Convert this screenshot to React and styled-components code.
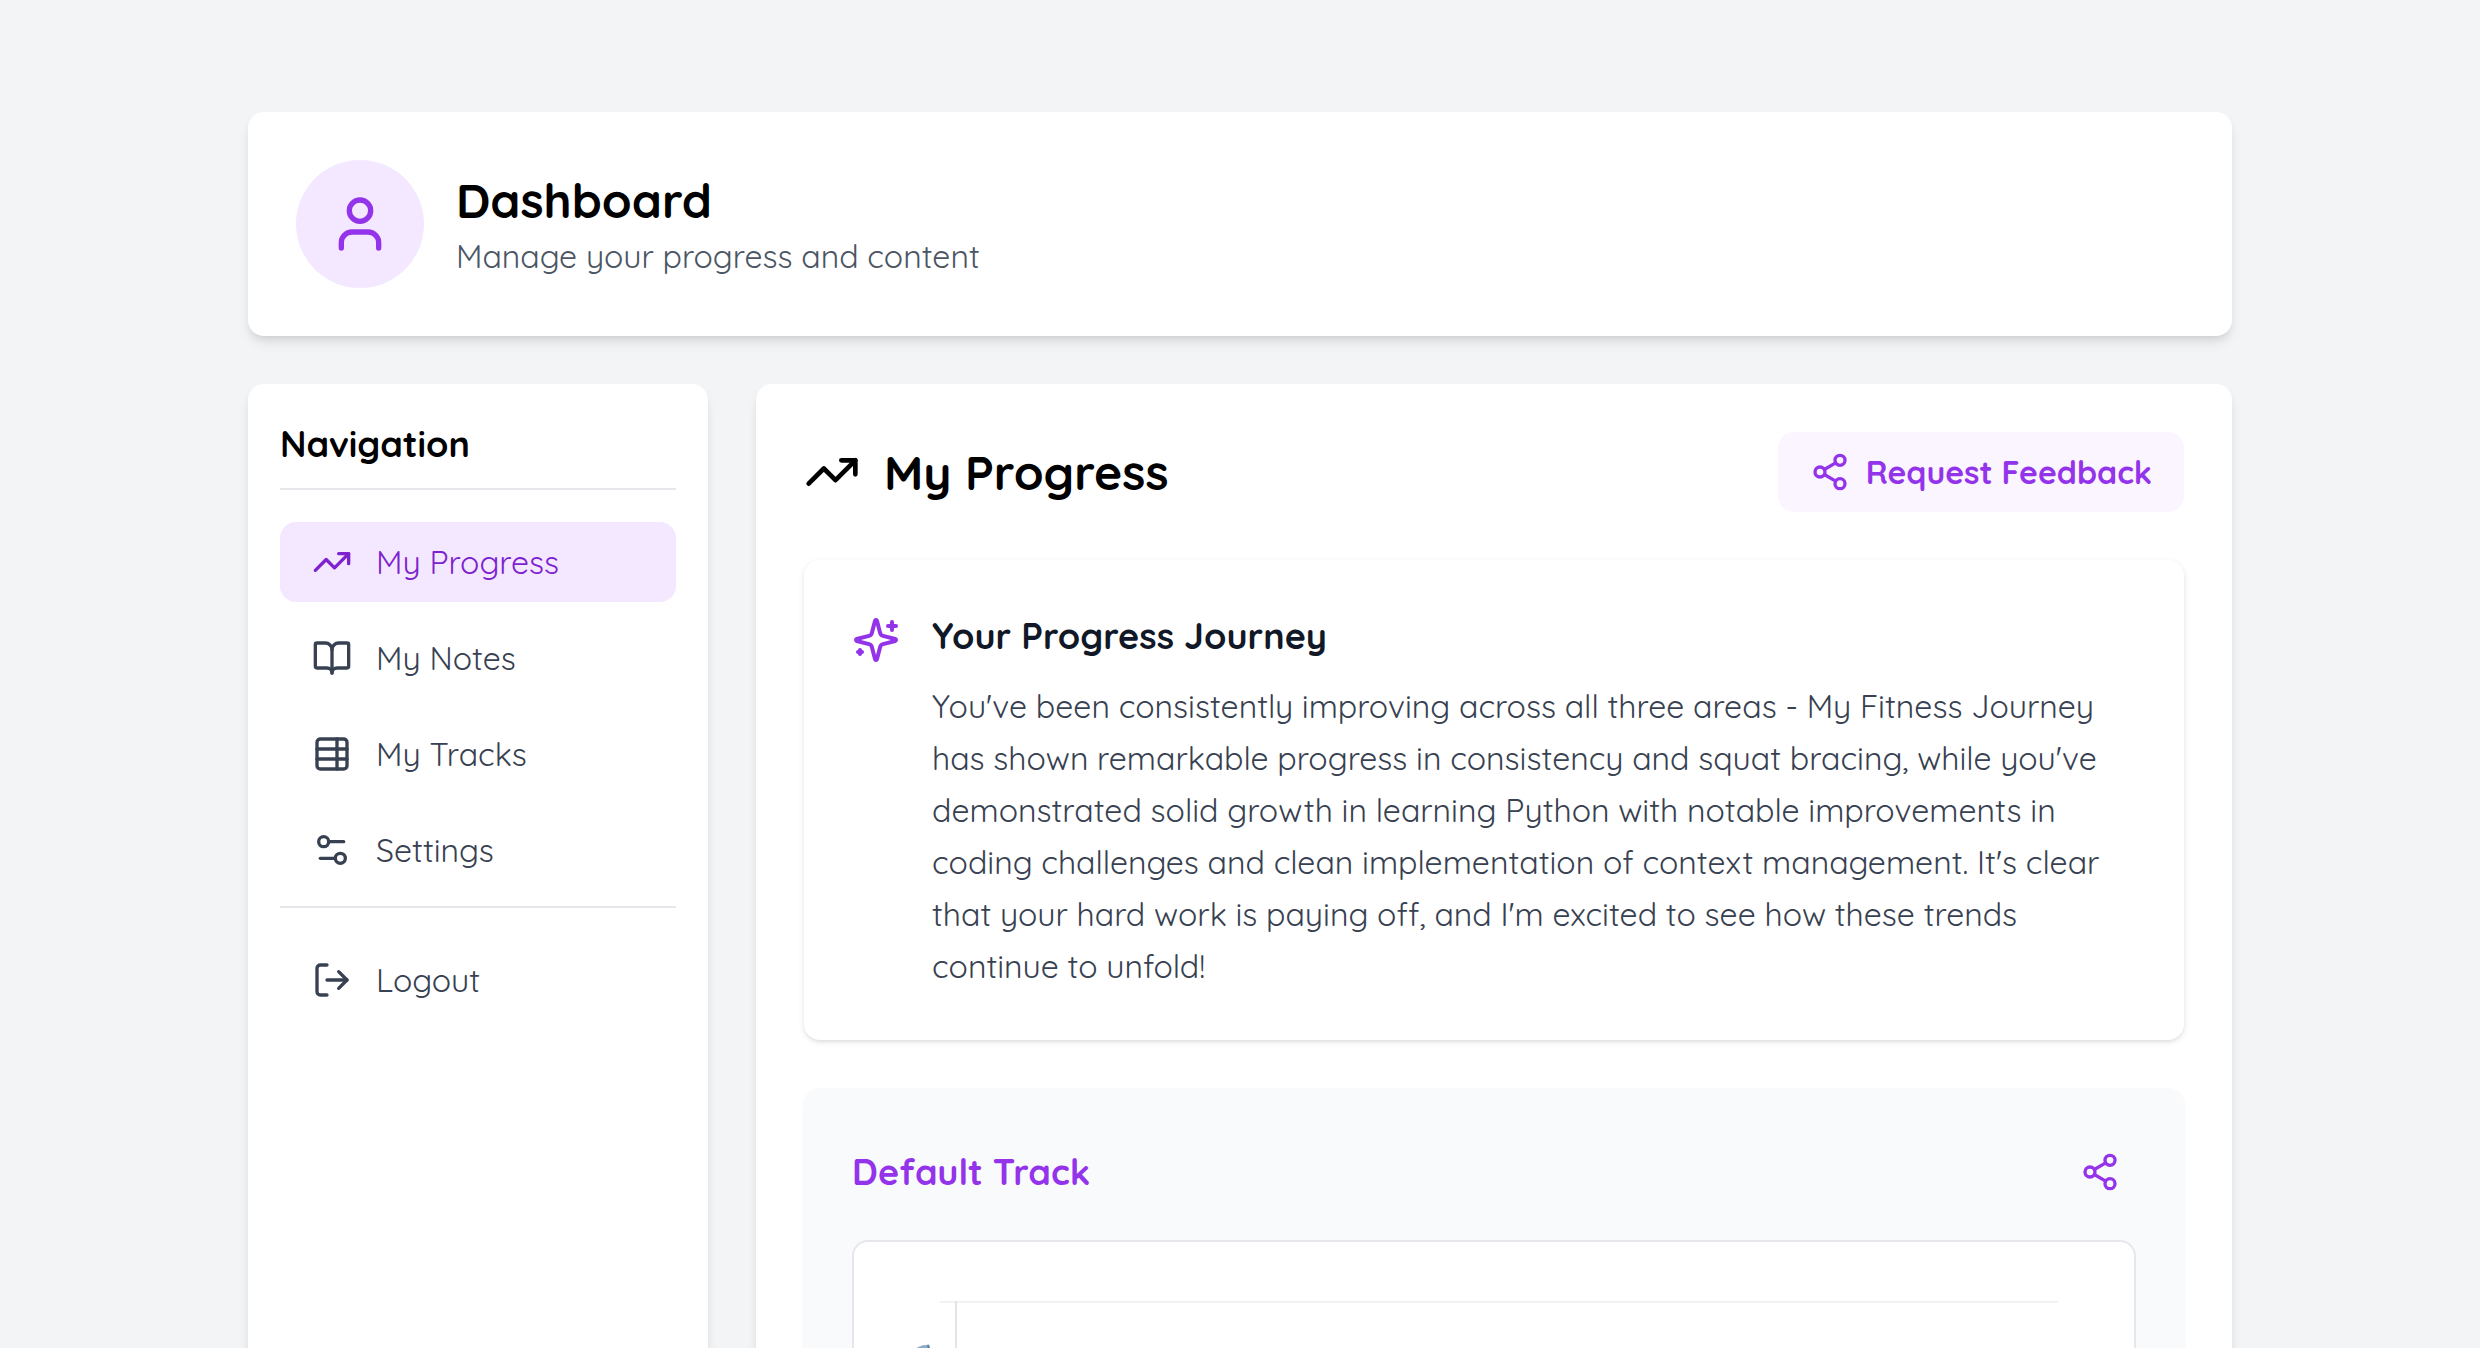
import React, { useState } from "react";
import styled, { createGlobalStyle } from "styled-components";
import {
  BookOpen,
  LogOut,
  Settings2,
  Share2,
  TableProperties,
  TrendingUp,
  User,
} from "lucide-react";

const GlobalStyle = createGlobalStyle`
  *,
  *::before,
  *::after {
    box-sizing: border-box;
  }
  body {
    margin: 0;
    background: #f3f4f6;
    color: #000;
    font-family: Quicksand, "Open Sans", sans-serif;
    font-size: 32px;
    line-height: 48px;
  }
  h1,
  h2,
  h3,
  p {
    margin: 0;
  }
  button {
    font: inherit;
    cursor: pointer;
  }
`;

const Page = styled.div`
  min-height: 100vh;
  padding: 112px 10%;
`;
const Card = styled.div`
  background: #fff;
  border-radius: 16px;
  box-shadow: 0 8px 12px -2px rgba(0, 0, 0, 0.1),
    0 4px 8px -4px rgba(0, 0, 0, 0.1);
`;
const HeaderCard = styled(Card).attrs({ as: "header" })`
  display: flex;
  align-items: center;
  gap: 32px;
  padding: 48px;
  margin-bottom: 48px;
`;
const Avatar = styled.div`
  display: flex;
  align-items: center;
  justify-content: center;
  width: 128px;
  height: 128px;
  border-radius: 50%;
  background: #f3e8ff;
  color: #9333ea;
`;
const PageTitle = styled.h1`
  font-size: 48px;
  line-height: 64px;
  font-weight: 700;
`;
const SubTitle = styled.p`
  color: #4b5563;
`;
const Columns = styled.div`
  display: grid;
  grid-template-columns: repeat(4, minmax(0, 1fr));
  gap: 48px;
`;
const Sidebar = styled(Card).attrs({ as: "aside" })`
  padding: 32px;
`;
const SidebarTitle = styled.h2`
  padding-bottom: 16px;
  margin-bottom: 32px;
  border-bottom: 2px solid #e5e7eb;
  font-size: 36px;
  line-height: 56px;
  font-weight: 700;
`;
const NavList = styled.nav`
  display: flex;
  flex-direction: column;
  gap: 16px;
`;
const NavItem = styled.button`
  display: flex;
  align-items: center;
  gap: 24px;
  width: 100%;
  padding: 16px 32px;
  border: 0;
  border-radius: 16px;
  text-align: left;
  background: ${(p) => (p.$active ? "#f3e8ff" : "transparent")};
  color: ${(p) => (p.$active ? "#7e22ce" : "#374151")};
`;
const LogoutWrap = styled.div`
  padding-top: 32px;
  border-top: 2px solid #e5e7eb;
`;
const Main = styled(Card).attrs({ as: "main" })`
  grid-column: span 3;
  padding: 48px;
`;
const MainHeader = styled.div`
  display: flex;
  align-items: center;
  justify-content: space-between;
  margin-bottom: 48px;
`;
const MainTitle = styled.h2`
  display: flex;
  align-items: center;
  gap: 24px;
  font-size: 48px;
  line-height: 64px;
  font-weight: 700;
`;
const FeedbackButton = styled.button`
  display: flex;
  align-items: center;
  gap: 16px;
  padding: 16px 32px;
  border: 0;
  border-radius: 16px;
  background: #faf5ff;
  color: #9333ea;
  font-weight: 700;
`;
const JourneyCard = styled.section`
  display: flex;
  align-items: flex-start;
  gap: 32px;
  padding: 48px;
  margin-bottom: 48px;
  border-radius: 16px;
  background: #fff;
  box-shadow: 0 2px 6px rgba(0, 0, 0, 0.1), 0 2px 4px -2px rgba(0, 0, 0, 0.1);
`;
const SparkleIcon = styled.svg`
  flex: none;
  width: 48px;
  height: 48px;
  margin-top: 8px;
  color: #9333ea;
`;
const SectionTitle = styled.h3`
  font-size: 36px;
  line-height: 56px;
  font-weight: 700;
  color: ${(p) => (p.$purple ? "#9333ea" : "#111827")};
`;
const JourneyText = styled.p`
  margin-top: 16px;
  line-height: 52px;
  color: #374151;
`;
const TrackPanel = styled.section`
  padding: 48px;
  border-radius: 16px;
  background: #f9fafb;
  box-shadow: 0 2px 4px rgba(0, 0, 0, 0.05);
`;
const TrackHeader = styled.div`
  display: flex;
  align-items: center;
  justify-content: space-between;
  margin-bottom: 32px;
`;
const IconButton = styled.button`
  display: flex;
  padding: 16px;
  border: 0;
  border-radius: 50%;
  background: transparent;
  color: #9333ea;
`;
const ChartBox = styled.div`
  padding: 32px 76px 32px 32px;
  border: 2px solid #e5e7eb;
  border-radius: 16px;
  background: #fff;
`;
const ChartSvg = styled.svg`
  display: block;
  width: 100%;
  height: 560px;
`;

const navItems = [
  { id: "progress", label: "My Progress", icon: TrendingUp },
  { id: "notes", label: "My Notes", icon: BookOpen },
  { id: "tracks", label: "My Tracks", icon: TableProperties },
  { id: "settings", label: "Settings", icon: Settings2 },
];

const Sparkles = () => (
  <SparkleIcon
    viewBox="0 0 24 24"
    fill="none"
    stroke="currentColor"
    strokeWidth="2"
    strokeLinecap="round"
    strokeLinejoin="round"
    aria-hidden="true"
  >
    <path d="M9.937 15.5A2 2 0 0 0 8.5 14.063l-6.135-1.582a.5.5 0 0 1 0-.962L8.5 9.936A2 2 0 0 0 9.937 8.5l1.582-6.135a.5.5 0 0 1 .963 0L14.063 8.5A2 2 0 0 0 15.5 9.937l6.135 1.581a.5.5 0 0 1 0 .964L15.5 14.063a2 2 0 0 0-1.437 1.437l-1.582 6.135a.5.5 0 0 1-.963 0z" />
    <path d="M20 3v4" />
    <path d="M22 5h-4" />
    <path d="M4 17v2" />
    <path d="M5 18H3" />
  </SparkleIcon>
);

const ProgressChart = () => (
  <ChartSvg role="img" aria-label="Default Track chart">
    <line x1="54" y1="28" x2="100%" y2="28" stroke="#f2f2f2" strokeWidth="2" />
    <line x1="70" y1="27" x2="70" y2="100%" stroke="#e4e4e4" strokeWidth="2" />
    {/* marker beside the axis */}
    <path d="M31 74Q36 71 43 71L44 75L40 88L26 86Z" fill="#86acd2" />
    <path d="M31 74Q36 71 43 71" fill="none" stroke="#a9b5bf" />
    <path d="M42 71L43 75" stroke="#5b7fa6" strokeWidth="2" />
  </ChartSvg>
);

const App = () => {
  const [active, setActive] = useState("progress");

  return (
    <>
      <GlobalStyle />
      <Page>
        <HeaderCard>
          <Avatar>
            <User size={64} />
          </Avatar>
          <div>
            <PageTitle>Dashboard</PageTitle>
            <SubTitle>Manage your progress and content</SubTitle>
          </div>
        </HeaderCard>

        <Columns>
          <Sidebar>
            <SidebarTitle>Navigation</SidebarTitle>
            <NavList>
              {navItems.map(({ id, label, icon: Icon }) => (
                <NavItem
                  key={id}
                  $active={active === id}
                  onClick={() => setActive(id)}
                >
                  <Icon size={40} />
                  {label}
                </NavItem>
              ))}
              <LogoutWrap>
                <NavItem>
                  <LogOut size={40} />
                  Logout
                </NavItem>
              </LogoutWrap>
            </NavList>
          </Sidebar>

          <Main>
            <MainHeader>
              <MainTitle>
                <TrendingUp size={56} />
                My Progress
              </MainTitle>
              <FeedbackButton>
                <Share2 size={40} />
                Request Feedback
              </FeedbackButton>
            </MainHeader>

            <JourneyCard>
              <Sparkles />
              <div>
                <SectionTitle>Your Progress Journey</SectionTitle>
                <JourneyText>
                  You've been consistently improving across all three areas - My
                  Fitness Journey has shown remarkable progress in consistency
                  and squat bracing, while you've demonstrated solid growth in
                  learning Python with notable improvements in coding challenges
                  and clean implementation of context management. It's clear
                  that your hard work is paying off, and I'm excited to see how
                  these trends continue to unfold!
                </JourneyText>
              </div>
            </JourneyCard>

            <TrackPanel>
              <TrackHeader>
                <SectionTitle $purple>Default Track</SectionTitle>
                <IconButton aria-label="Share track">
                  <Share2 size={40} />
                </IconButton>
              </TrackHeader>
              <ChartBox>
                <ProgressChart />
              </ChartBox>
            </TrackPanel>
          </Main>
        </Columns>
      </Page>
    </>
  );
};

export default App;
